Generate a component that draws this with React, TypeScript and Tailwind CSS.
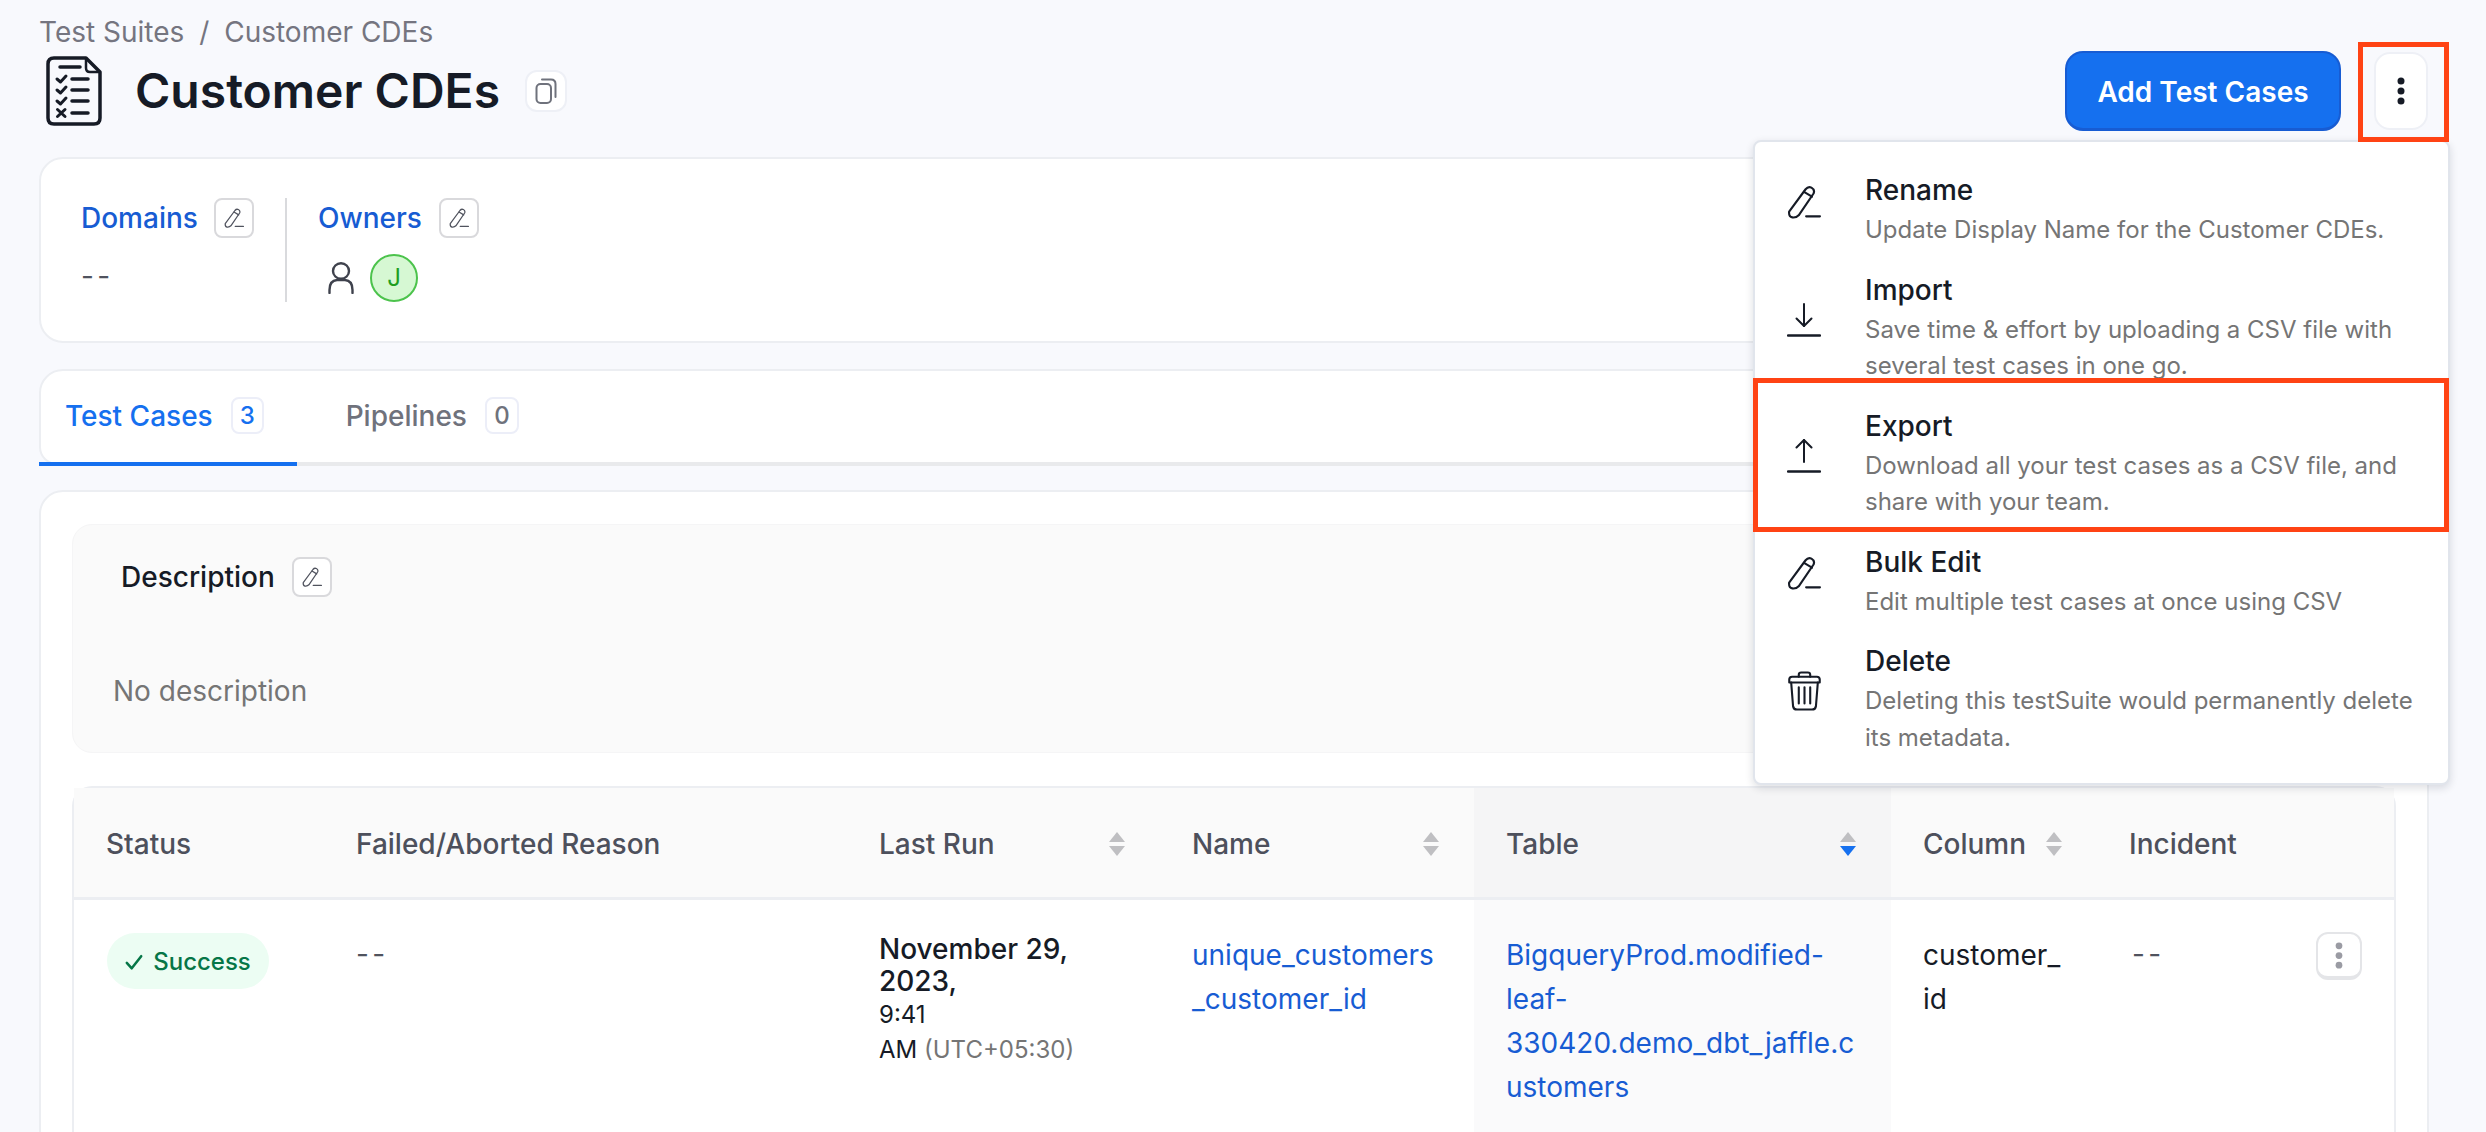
import React from "react";

function PencilIcon({ className }: { className?: string }) {
  return (
    <svg viewBox="0 0 32 32" fill="none" stroke="currentColor" strokeWidth="2" strokeLinecap="round" strokeLinejoin="round" className={className}>
      <path d="M2 25 L17.500 4 Q20 1 23 2.500 Q26.500 4.500 25 8 L11 28.500 Q8.500 31 5 30.500 Q1.500 30 2 25 Z" />
      <path d="M16 6.500 L23.500 11" />
      <path d="M18 29.500 H31" />
    </svg>
  );
}

function EditButton() {
  return (
    <div className="flex h-10 w-10 shrink-0 items-center justify-center rounded-lg border-2 border-[#d9d9dc] bg-white text-[#50535e]">
      <PencilIcon className="h-5 w-5" />
    </div>
  );
}

function ChecklistIcon() {
  return (
    <svg viewBox="0 0 56 70" fill="none" stroke="#161b26" strokeWidth="3.500" strokeLinecap="round" strokeLinejoin="round" className="h-[70px] w-14 shrink-0">
      <path d="M8 2 H40 L54 16 V62 Q54 68 48 68 H8 Q2 68 2 62 V8 Q2 2 8 2 Z" />
      <path d="M40 3 V12 Q40 16 44 16 H53" strokeWidth="2.500" />
      <path d="M14 11 H34" />
      <path d="M11 23 L14.500 26 L20 20 M11 34 L14.500 37 L20 31 M11 45 L14.500 48 L20 42" strokeWidth="3" />
      <path d="M11.500 53.500 L19 60.500 M19 53.500 L11.500 60.500" strokeWidth="3" />
      <path d="M26 23 H42 M26 34 H42 M26 45 H42 M26 57 H42" />
    </svg>
  );
}

function CopyIcon() {
  return (
    <svg viewBox="0 0 22 26" fill="none" stroke="#6f727c" strokeWidth="2" strokeLinecap="round" className="h-[26px] w-[22px]">
      <rect x="1.500" y="6" width="14.500" height="19" rx="4" />
      <path d="M7 1.500 H16 Q20.500 1.500 20.500 6 V19" />
    </svg>
  );
}

function UserIcon() {
  return (
    <svg viewBox="0 0 26 32" fill="none" stroke="#3f424d" strokeWidth="2.400" strokeLinecap="round" className="h-8 w-[26px]">
      <ellipse cx="13" cy="9" rx="8" ry="7.800" />
      <path d="M1.500 31 V28 Q1.500 18.500 9 18 H17 Q24.500 18.500 24.500 28 V31" />
    </svg>
  );
}

function SortIcon({ active }: { active?: boolean }) {
  return (
    <svg viewBox="0 0 16 24" className="h-6 w-4 shrink-0">
      <path d="M8 0 L16 10 H0 Z" fill="#bfbfc2" />
      <path d="M0 14 H16 L8 24 Z" fill={active ? "#1570ef" : "#bfbfc2"} />
    </svg>
  );
}

function Dots({ className }: { className?: string }) {
  return (
    <svg viewBox="0 0 8 28" fill="currentColor" className={className}>
      <circle cx="4" cy="4" r="3.500" />
      <circle cx="4" cy="14" r="3.500" />
      <circle cx="4" cy="24" r="3.500" />
    </svg>
  );
}

function ArrowLine({ up }: { up?: boolean }) {
  return (
    <svg viewBox="0 0 34 34" fill="none" stroke="#161b26" strokeWidth="2" strokeLinecap="round" strokeLinejoin="round" className="h-[34px] w-[34px]">
      <path d="M17 1 V23" />
      {up ? <path d="M9.500 8.500 L17 1 L24.500 8.500" /> : <path d="M9.500 15.500 L17 23 L24.500 15.500" />}
      <path d="M1 32.500 H33" strokeWidth="2.400" />
    </svg>
  );
}

function TrashIcon() {
  return (
    <svg viewBox="0 0 36 42" fill="none" stroke="#161b26" strokeWidth="2.200" strokeLinecap="round" strokeLinejoin="round" className="h-10 w-[35px]">
      <path d="M2 9 Q2 6 5 6 H31 Q34 6 34 9 V12 H2 Z" />
      <path d="M12 6 V4 Q12 1.500 14.500 1.500 H21.500 Q24 1.500 24 4 V6" />
      <path d="M4 12 L6 37 Q6.500 40.500 10 40.500 H26 Q29.500 40.500 30 37 L32 12" />
      <path d="M12 17 V34 M18 17 V34 M24 17 V34" />
    </svg>
  );
}

const menuItems = [
  { title: "Rename", desc: "Update Display Name for the Customer CDEs.", icon: <PencilIcon className="h-[34px] w-[34px]" /> },
  { title: "Import", desc: "Save time & effort by uploading a CSV file with several test cases in one go.", icon: <ArrowLine /> },
  { title: "Export", desc: "Download all your test cases as a CSV file, and share with your team.", icon: <ArrowLine up /> },
  { title: "Bulk Edit", desc: "Edit multiple test cases at once using CSV", icon: <PencilIcon className="h-[34px] w-[34px]" /> },
  { title: "Delete", desc: "Deleting this testSuite would permanently delete its metadata.", icon: <TrashIcon /> },
];

function HeaderCell({ label, sort, active }: { label: string; sort?: boolean; active?: boolean }) {
  return (
    <div className={`flex items-center justify-between pl-[32px] pr-[35px] pt-[3px] text-[28px] font-medium text-[#4d505c] ${active ? "bg-[#f5f5f6]" : ""}`}>
      <span>{label}</span>
      {sort && <SortIcon active={active} />}
    </div>
  );
}

export default function App() {
  return (
    <div className="relative h-[1132px] w-[2486px] overflow-hidden bg-[#f8f9fd] font-[Inter,sans-serif] text-[#161b26]">
      <div className="flex h-full flex-col pl-[39px] pr-[57px] pt-[14px]">
        <div className="h-9 text-[28px] leading-9 text-[#757580]">
          Test Suites <span className="mx-[7px]">/</span> Customer CDEs
        </div>

        <div className="flex h-[82px] shrink-0 items-center">
          <div className="ml-[7px]"><ChecklistIcon /></div>
          <h1 className="ml-[33px] text-[48px] font-semibold">Customer CDEs</h1>
          <div className="ml-[25px] flex h-[42px] w-[42px] items-center justify-center rounded-xl border-2 border-[#eef0f6] bg-white">
            <CopyIcon />
          </div>
          <div className="ml-auto flex h-20 w-[276px] items-center justify-center rounded-[18px] border-2 border-b-[3px] border-[#175cd3] bg-[#1570ef] pt-[3px] text-[28px] font-semibold text-white">
            Add Test Cases
          </div>
          <div className="ml-[33px] mr-px flex h-[78px] w-[54px] items-center justify-center rounded-2xl border-2 border-[#eef0f6] bg-white text-[#161b26]">
            <Dots className="h-[28px] w-2" />
          </div>
        </div>

        <div className="mt-[25px] flex h-[186px] shrink-0 items-center rounded-[24px] border-2 border-[#eceef2] bg-white pl-[40px]">
          <div className="h-[104px] w-[206px] border-r-2 border-[#d9dadd]">
            <div className="flex h-10 items-center gap-4 text-[28px] font-medium text-[#175cd3]">
              Domains <EditButton />
            </div>
            <div className="mt-[22px] text-[28px] leading-[32px] tracking-[0.12em] text-[#50535e]">--</div>
          </div>
          <div className="ml-[31px] h-[104px]">
            <div className="flex h-10 items-center gap-[17px] text-[28px] font-medium text-[#175cd3]">
              Owners <EditButton />
            </div>
            <div className="mt-4 flex items-center gap-4 pl-[10px]">
              <UserIcon />
              <div className="flex h-12 w-12 items-center justify-center rounded-full border-2 border-[#4cc34c] bg-[#d6f8d3] text-[24px] text-[#1f9e1f]">J</div>
            </div>
          </div>
        </div>

        <div className="relative mt-[26px] h-[97px] shrink-0">
          <div className="flex h-[96px] items-center rounded-t-[24px] rounded-b-[18px] border-2 border-[#eceef2] bg-white pb-[3px] text-[28px] font-medium">
            <div className="ml-[24px] text-[#1570ef]">Test Cases</div>
            <div className="ml-[18px] flex h-[37px] w-[33px] items-center justify-center rounded-lg border-2 border-[#eceef8] text-[24px] text-[#1570ef]">3</div>
            <div className="ml-[82px] text-[#6f727c]">Pipelines</div>
            <div className="ml-[18px] flex h-[37px] w-[34px] items-center justify-center rounded-lg border-2 border-[#eceef8] text-[24px] text-[#6f727c]">0</div>
          </div>
          <div className="absolute bottom-0 left-0 right-0 h-1 bg-[#e9eaec]">
            <div className="h-1 w-[258px] bg-[#1570ef]" />
          </div>
        </div>

        <div className="mt-[24px] flex-1 rounded-t-[24px] border-2 border-[#eceef2] bg-white px-[31px] pt-[32px]">
          <div className="h-[229px] rounded-[20px] border border-[#f5f5f6] bg-[#fafafa]">
            <div className="ml-[48px] mt-[32px] flex h-10 items-center gap-[17px] text-[28px] font-medium">
              Description <EditButton />
            </div>
            <div className="ml-[40px] mt-[76px] text-[28px] leading-9 text-[#757575]">No description</div>
          </div>

          <div className="mt-[33px] rounded-t-[20px] border-2 border-b-0 border-[#eceef2]">
            <div className="grid h-[112px] grid-cols-[250px_523px_313px_314px_417px_206px_1fr] border-b-[3px] border-[#eceef2] bg-[#fafafa]">
              <HeaderCell label="Status" />
              <HeaderCell label="Failed/Aborted Reason" />
              <HeaderCell label="Last Run" sort />
              <HeaderCell label="Name" sort />
              <HeaderCell label="Table" sort active />
              <HeaderCell label="Column" sort />
              <HeaderCell label="Incident" />
            </div>

            <div className="grid h-[300px] grid-cols-[250px_523px_313px_314px_417px_206px_1fr] text-[28px] leading-[44px]">
              <div className="pl-[33px] pt-[33px]">
                <div className="flex h-14 w-[162px] items-center justify-center gap-[10px] rounded-full bg-[#ecfdf3] pt-[2px] text-[24px] font-medium text-[#067647]">
                  <svg viewBox="0 0 20 20" fill="none" stroke="#067647" strokeWidth="2.800" strokeLinecap="round" strokeLinejoin="round" className="h-[18px] w-[18px]">
                    <path d="M2 11 L7.500 17 L18 3.500" />
                  </svg>
                  Success
                </div>
              </div>
              <div className="pl-[32px] pt-[32px] tracking-[0.12em] text-[#50535e]">--</div>
              <div className="pl-[32px] pr-[35px] pt-[33px]">
                <div className="text-[28px] font-medium leading-[32px]">November 29, 2023,</div>
                <div className="text-[24px] leading-[35px]">
                  9:41<br />AM <span className="text-[#757575]">(UTC+05:30)</span>
                </div>
              </div>
              <div className="pl-[32px] pr-[35px] pt-[33px] text-[#175cd3] [overflow-wrap:anywhere]">unique_customers_customer_id</div>
              <div className="bg-[#fafafb] pl-[32px] pr-[32px] pt-[33px] text-[#175cd3] [overflow-wrap:anywhere]">BigqueryProd.modified-leaf-330420.demo_dbt_jaffle.customers</div>
              <div className="pl-[32px] pr-[35px] pt-[33px] [overflow-wrap:anywhere]">customer_id</div>
              <div className="flex items-start justify-between pl-[35px] pr-[32px] pt-[33px]">
                <span className="-mt-px tracking-[0.12em] text-[#50535e]">--</span>
                <div className="-mt-px flex h-12 w-[46px] items-center justify-center rounded-xl border-2 border-b-4 border-[#e4e5e8] bg-white text-[#9a9ba3]">
                  <Dots className="h-[27px] w-2" />
                </div>
              </div>
            </div>
          </div>
        </div>
      </div>

      <div className="absolute left-[1753px] top-[140px] w-[697px] rounded-lg border-2 border-[#e1e5ec] bg-white pb-[15px] pt-[19px] shadow-[0_3px_8px_rgba(16,24,40,0.14)]">
        {menuItems.map((item) => (
          <div key={item.title} className="flex items-center pb-3 pr-[30px] pt-[10px]">
            <div className="mb-[16px] flex w-[110px] shrink-0 justify-start pl-[32px]">{item.icon}</div>
            <div>
              <div className="mb-[2px] text-[28px] font-medium leading-[39px]">{item.title}</div>
              <div className="text-[24px] leading-[36.5px] text-[#757575]">{item.desc}</div>
            </div>
          </div>
        ))}
      </div>

      <div className="absolute left-[2358px] top-[42px] h-[100px] w-[91px] border-[5px] border-[#ff4314]" />
      <div className="absolute left-[1753px] top-[378px] h-[154px] w-[696px] border-[5px] border-[#ff4314]" />
    </div>
  );
}
